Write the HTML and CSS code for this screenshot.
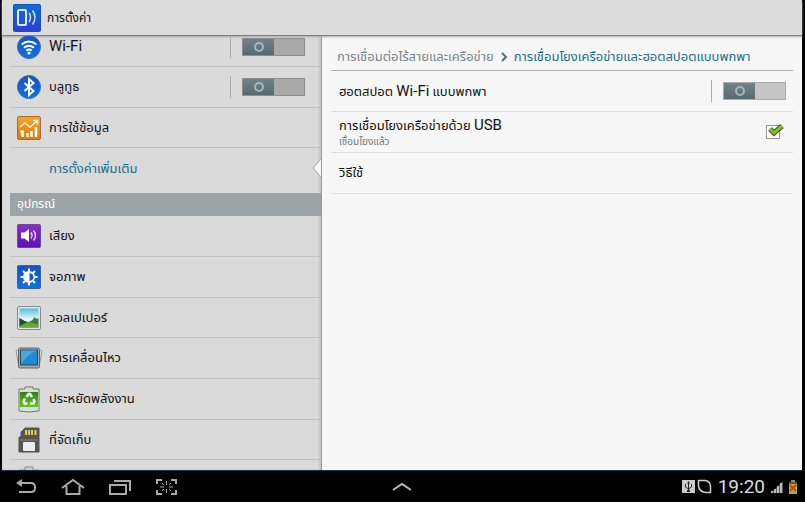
FILE: index.html
```html
<!DOCTYPE html>
<html lang="th">
<head>
<meta charset="utf-8">
<title>การตั้งค่า</title>
<link rel="stylesheet" href="styles.css">
</head>
<body>
<div class="device">
  <header class="topbar">
    <svg class="app-icon" viewBox="0 0 28 28" aria-hidden="true">
      <defs>
        <linearGradient id="blue" x1="0" y1="0" x2="0" y2="1"><stop offset="0" stop-color="#0d6fd8"/><stop offset="1" stop-color="#2a3fd4"/></linearGradient>
        <linearGradient id="display-blue" x1="0" y1="0" x2="0" y2="1"><stop offset="0" stop-color="#1450c0"/><stop offset="1" stop-color="#0e74e2"/></linearGradient>
        <linearGradient id="round" x1="0" y1="0" x2="0" y2="1"><stop offset="0" stop-color="#1a50c0"/><stop offset="1" stop-color="#0c74e6"/></linearGradient>
        <linearGradient id="orange" x1="0" y1="0" x2="0" y2="1"><stop offset="0" stop-color="#f6a52a"/><stop offset="1" stop-color="#e57a08"/></linearGradient>
        <linearGradient id="purple" x1="0" y1="0" x2="0" y2="1"><stop offset="0" stop-color="#8a2fd0"/><stop offset="1" stop-color="#5a12b4"/></linearGradient>
        <linearGradient id="sky" x1="0" y1="0" x2="0" y2="1"><stop offset="0" stop-color="#4fc0d8"/><stop offset="0.6" stop-color="#f2fafa"/></linearGradient>
        <linearGradient id="green" x1="0" y1="0" x2="0" y2="1"><stop offset="0" stop-color="#2b8412"/><stop offset="1" stop-color="#63c61c"/></linearGradient>
      </defs>
      <rect x="0.5" y="0.5" width="27" height="27" rx="1" fill="url(#blue)" stroke="#1d4fb0"/>
      <rect x="5" y="6" width="8" height="15" rx="1" fill="none" stroke="#dcebff" stroke-width="2"/>
      <path d="M16 9q3 4 0 9M19.500 6.500q5 7 0 14" fill="none" stroke="#cfe2ff" stroke-width="1.500"/>
    </svg>
    <h1 class="title">การตั้งค่า</h1>
  </header>

  <main class="panes">
    <nav class="sidebar">
      <ul class="list list-network">
        <li class="row">
          <svg class="icon" viewBox="0 0 24 24" aria-hidden="true"><circle cx="12" cy="12" r="11.500" fill="url(#round)" stroke="#4a6f9c"/><path d="M4.500 9.500q7.500-6 15 0M7 12.700q5-4 10 0M9.300 15.500q2.700-2 5.400 0" fill="none" stroke="#fff" stroke-width="2"/><circle cx="12" cy="18" r="1.600" fill="#fff"/></svg>
          <span class="label" id="wifi"><span class="latin">Wi-Fi</span></span>
          <span class="divider"></span>
          <button class="switch" type="button" role="switch" aria-checked="false" aria-labelledby="wifi"><span class="knob"></span></button>
        </li>
        <li class="row">
          <svg class="icon" viewBox="0 0 24 24" aria-hidden="true"><circle cx="12" cy="12" r="11.500" fill="url(#round)" stroke="#4a6f9c"/><path d="M7.500 8l9 8-4.500 4V4l4.500 4-9 8" fill="none" stroke="#fff" stroke-width="2"/></svg>
          <span class="label" id="bt">บลูทูธ</span>
          <span class="divider"></span>
          <button class="switch" type="button" role="switch" aria-checked="false" aria-labelledby="bt"><span class="knob"></span></button>
        </li>
        <li class="row">
          <svg class="icon" viewBox="0 0 24 24" aria-hidden="true"><rect x="0.500" y="0.500" width="23" height="23" rx="1.500" fill="url(#orange)" stroke="#a5693a"/><path d="M3.500 15.500h2V21M10.500 21v-4M14.500 21v-6M19 21V11" fill="none" stroke="#fff" stroke-width="2.500"/><path d="M3 11l5-4 5 4 7-6M16 4.500h4.500v4" fill="none" stroke="#fff3dd" stroke-width="1.500"/></svg>
          <a class="label" href="#data">การใช้ข้อมูล</a>
        </li>
        <li class="row selected">
          <a class="label" href="#more" aria-current="page">การตั้งค่าเพิ่มเติม</a>
          <svg class="pointer" viewBox="0 0 10 20" aria-hidden="true"><path d="M10 0L1 10l9 10z" fill="#f7f7f7"/><path d="M10 0L1 10l9 10" fill="none" stroke="#999"/></svg>
        </li>
      </ul>
      <h2 class="section">อุปกรณ์</h2>
      <ul class="list list-device">
        <li class="row">
          <svg class="icon" viewBox="0 0 24 24" aria-hidden="true"><rect x="0.500" y="0.500" width="23" height="23" rx="1" fill="url(#purple)" stroke="#6b4a90"/><path d="M4 8.500h3.500L12 5v13l-4.500-3.500H4z" fill="#fff"/><path d="M14 8.500q2 3 0 6M16.500 6.500q4 5 0 10" fill="none" stroke="#e6d4ff" stroke-width="1.500"/></svg>
          <a class="label" href="#sound">เสียง</a>
        </li>
        <li class="row">
          <svg class="icon" viewBox="0 0 24 24" aria-hidden="true"><rect x="0.500" y="0.500" width="23" height="23" rx="1" fill="url(#display-blue)" stroke="#3b639c"/><path d="M12 3.500v17M3.500 12h17M6 6l12 12M18 6L6 18" stroke="#fff" stroke-width="2"/><circle cx="12" cy="12" r="6" fill="#fff"/><path d="M12.500 8q4 .5 4 4t-4 4z" fill="#155bd6"/></svg>
          <a class="label" href="#display">จอภาพ</a>
        </li>
        <li class="row">
          <svg class="icon" viewBox="0 0 24 24" aria-hidden="true"><rect x="0.500" y="0.500" width="23" height="23" rx="1.500" fill="#e5e5e5" stroke="#888"/><rect x="2.500" y="2.500" width="19" height="19" fill="url(#sky)"/><path d="M2.500 13l5 2 4 1 4-2 2-3 2 2 2-1v9.500h-19z" fill="#3d7a34"/><path d="M2.500 20l10-4 9 3v2.500h-19z" fill="#65a83a"/><path d="M2.500 12l7 4-7 4z" fill="#1f4d31"/></svg>
          <a class="label" href="#wallpaper">วอลเปเปอร์</a>
        </li>
        <li class="row">
          <svg class="icon icon-wide" viewBox="0 0 28 24" aria-hidden="true"><path d="M3 4L1 5l3 16 3 1M25 4l2 1-3 16-3 1" fill="#e0e4e6" stroke="#8c9499"/><rect x="3.500" y="2" width="21" height="20" rx="1.500" fill="#aaa" stroke="#5f666a"/><rect x="5.500" y="4" width="17" height="15" fill="#1f8ad2" stroke="#345"/><path d="M6 4.500h16Q13 8 6 18z" fill="#49a9df"/></svg>
          <a class="label" href="#motion">การเคลื่อนไหว</a>
        </li>
        <li class="row">
          <svg class="icon icon-tall" viewBox="0 0 24 28" aria-hidden="true"><path d="M2 4h6V2h8v2h6v22q-10 2-20 0z" fill="#d9dddb" stroke="#70766f"/><rect x="3" y="7" width="18" height="15" fill="url(#green)"/><path d="M9.500 12l2-3h1.500l2 3M16.500 14l1 2.500-1 2H13M10.500 18.500H7.500l-1-2 1.500-3" fill="none" stroke="#fff" stroke-width="2.500"/></svg>
          <a class="label" href="#power">ประหยัดพลังงาน</a>
        </li>
        <li class="row">
          <svg class="icon icon-tall" viewBox="0 0 24 28" aria-hidden="true"><path d="M8 2h14v24H2V11h2V6z" fill="#555" stroke="#555"/><path d="M9 4v5M12 4v5M15 4v5M18.500 4v5" stroke="#e5cf55" stroke-width="2"/><rect x="6" y="16" width="12" height="9" rx="1" fill="#eee"/><path d="M3 14h18" stroke="#888"/></svg>
          <a class="label" href="#storage">ที่จัดเก็บ</a>
        </li>
        <li class="row row-next">
          <svg class="icon icon-tall" viewBox="0 0 24 28" aria-hidden="true"><path d="M2 26V6h6V3h8v3h6v20z" fill="#c9cbc9" stroke="#8d908d"/></svg>
        </li>
      </ul>
    </nav>

    <section class="detail">
      <div class="crumbs">
        <a class="crumb" href="#wireless">การเชื่อมต่อไร้สายและเครือข่าย</a>
        <svg class="chevron" viewBox="0 0 8 10" aria-hidden="true"><path d="M2 1l4 4-4 4" fill="none" stroke="#526c78" stroke-width="2"/></svg>
        <span class="crumb current">การเชื่อมโยงเครือข่ายและฮอตสปอตแบบพกพา</span>
      </div>
      <div class="option">
        <span class="label" id="hotspot">ฮอตสปอต <span class="latin">Wi-Fi</span> แบบพกพา</span>
        <span class="divider"></span>
        <button class="switch" type="button" role="switch" aria-checked="false" aria-labelledby="hotspot"><span class="knob"></span></button>
      </div>
      <label class="option" for="usb">
        <span class="stack">
          <span class="label">การเชื่อมโยงเครือข่ายด้วย <span class="latin">USB</span></span>
          <span class="note">เชื่อมโยงแล้ว</span>
        </span>
        <span class="tick">
          <input class="box" type="checkbox" id="usb" checked>
          <svg class="mark" viewBox="0 0 18 14" aria-hidden="true"><path d="M3 5l4 4 8-7" fill="none" stroke="#33521a" stroke-width="5"/><path d="M3 5l4 4 8-7" fill="none" stroke="#86c422" stroke-width="3"/></svg>
        </span>
      </label>
      <div class="option">
        <a class="label" href="#help">วิธีใช้</a>
      </div>
    </section>
  </main>

  <footer class="navbar">
    <div class="keys">
      <button class="key" type="button" aria-label="กลับ"><svg viewBox="0 0 24 20"><path d="M5 6h12q4 0 4 4.500T17 15H5" fill="none" stroke="#aaa" stroke-width="2"/><path d="M2 6l6-4v8z" fill="#aaa"/></svg></button>
      <button class="key" type="button" aria-label="หน้าหลัก"><svg viewBox="0 0 24 20"><path d="M1 11L12 3l11 8M5.500 9v8h13V9" fill="none" stroke="#aaa" stroke-width="2"/></svg></button>
      <button class="key" type="button" aria-label="แอพล่าสุด"><svg viewBox="0 0 24 20"><path d="M2 8h16v9H2zM6 4h16v10" fill="none" stroke="#aaa" stroke-width="2"/></svg></button>
      <button class="key" type="button" aria-label="จับภาพหน้าจอ"><svg viewBox="0 0 24 20"><path d="M7 3H2v4M16 3h5v4M7 17H2v-4M16 17h5v-4" fill="none" stroke="#aaa" stroke-width="2"/><path d="M11.500 4v4M11.500 12v4M5 10h4M14 10h4M7 6l2 2M16 6l-2 2M7 14l2-2M16 14l-2-2" stroke="#aaa"/></svg></button>
    </div>
    <button class="key" type="button" aria-label="เปิดถาด"><svg viewBox="0 0 24 20"><path d="M3 13l9-6 9 6" fill="none" stroke="#bbb" stroke-width="2"/></svg></button>
    <div class="status">
      <svg class="usb" viewBox="0 0 13 13" aria-hidden="true"><rect width="13" height="13" fill="#ccc"/><path d="M6.500 2v9M3.500 4v3l3 2 3-2V4" fill="none" stroke="#222"/><path d="M6.500 1L8 3.500H5zM5 10h3v2H5z" fill="#222"/></svg>
      <svg class="leaf" viewBox="0 0 15 15" aria-hidden="true"><path d="M1.500 1.500h7q5 1 5 6v6h-5q-6-1-7-6z" fill="none" stroke="#ccc" stroke-width="1.500"/></svg>
      <time class="clock">19:20</time>
      <svg class="signal" viewBox="0 0 12 12" aria-hidden="true"><path d="M0 12L12 0v12z" fill="#555"/><path d="M0 10h2v2H0zM3 8h2v4H3zM6 5h2v7H6zM9 2h2v10H9z" fill="#bbb"/></svg>
      <svg class="battery" viewBox="0 0 10 14" aria-hidden="true"><rect x="3" width="4" height="2" fill="#888"/><rect x="1" y="2" width="8" height="12" fill="#9dbb26"/><rect x="1" y="2" width="8" height="2" fill="#556"/><path d="M2 5l6 6M8 5l-6 6" stroke="#e03a12" stroke-width="2"/></svg>
    </div>
  </footer>
</div>
</body>
</html>
```
FILE: styles.css
```css
*, *::before { box-sizing: border-box; }

body {
  margin: 0;
  background: #fff;
  color: #111;
  font: 12px/16px Roboto, "Noto Sans Thai", "Droid Sans Thai", "Noto Sans", sans-serif;
}

a { color: inherit; text-decoration: none; }
ul { list-style: none; margin: 0; padding: 0; }
button { padding: 0; border: 0; background: none; font: inherit; }
svg { display: block; }

.device {
  display: flex;
  flex-direction: column;
  height: calc(100vh - 5px);
  border: solid #000;
  border-width: 0 3px 0 2px;
}

.topbar {
  position: relative;
  display: flex;
  align-items: center;
  gap: 6px;
  flex: 0 0 36px;
  padding: 0 11px;
  background: #dcdcdc;
  border-bottom: 1px solid #808080;
  box-shadow: 0 1px 2px #aaa;
}

.app-icon { width: 28px; height: 28px; }
.title { margin: 0; font-size: 12px; font-weight: 400; }

.panes {
  display: grid;
  grid-template-columns: minmax(0, 2fr) minmax(0, 3fr);
  flex: 1;
  min-height: 0;
}

.sidebar {
  display: flex;
  flex-direction: column;
  min-height: 0;
  padding-left: 8px;
  overflow: hidden;
  background: #dadada;
  border-right: 1px solid #999;
  box-shadow: inset -2px 0 2px #c4c4c4;
}

.row {
  position: relative;
  display: flex;
  align-items: center;
  flex: 0 0 auto;
  gap: 8px;
  height: 41px;
  padding: 0 16px 0 7px;
  border-bottom: 1px solid #c2c2c2;
}

.list-network .row:first-child { height: 31px; padding-bottom: 9px; }
.list-network .row:nth-child(3) { height: 40px; }
.list-network .selected { height: 45px; padding-left: 39px; padding-bottom: 3px; border-bottom: 0; }
.list-device { flex: 1; min-height: 0; overflow: hidden; }
.list-device .row:nth-child(3n) { height: 40px; }
.row-next { align-items: flex-start; padding-top: 4px; }

.icon { width: 24px; height: 24px; flex: none; }
.icon-wide { width: 28px; margin: 0 -2px; }
.icon-tall { height: 28px; }
.label { font-size: 13px; line-height: 18px; }
.latin { font-size: 15px; }
.selected .label, .crumb.current { color: #17708f; }

.pointer { position: absolute; top: 10px; right: -1px; width: 10px; height: 20px; }

.divider { width: 1px; height: 22px; margin: 0 3px 0 auto; background: #aaa; }

.switch {
  width: 63px;
  height: 18px;
  background: #a9a9a9;
  border: 1px solid #8d8d8d;
}

.detail .switch { background: #c5c5c5; border-color: #aaa; }

.knob {
  display: grid;
  place-items: center;
  width: 31px;
  height: 16px;
  background: linear-gradient(#718289, #566a72);
}

.knob::before {
  content: "";
  width: 10px;
  height: 10px;
  border: 2px solid #a9b6bb;
  border-radius: 50%;
}

.section {
  flex: none;
  margin: 0;
  padding: 3px 7px 4px;
  background: #9aa3a8;
  color: #fff;
  font-size: 12px;
  font-weight: 400;
}

.detail { padding: 0 9px; background: #f7f7f7; }

.crumbs {
  display: flex;
  align-items: center;
  gap: 6px;
  height: 35px;
  padding: 8px 6px 0;
  border-bottom: 1px solid #b0b0b0;
  white-space: nowrap;
}

.crumb { color: #78858c; font-size: 13px; }
.chevron { width: 8px; height: 10px; flex: none; }

.option {
  display: flex;
  align-items: center;
  gap: 8px;
  height: 41px;
  padding: 0 7px 0 8px;
  border-bottom: 1px solid #dedede;
}

.stack { display: grid; }
.note { color: #777; font-size: 10px; line-height: 14px; }

.tick { position: relative; margin: 0 6px 0 auto; }

.box {
  display: block;
  appearance: none;
  width: 14px;
  height: 14px;
  margin: 0;
  background: #fff;
  border: 1px solid #999;
}

.mark { position: absolute; top: -1px; left: 1px; width: 18px; height: 14px; }

.navbar {
  display: grid;
  grid-template-columns: 1fr auto 1fr;
  align-items: center;
  flex: 0 0 32px;
  padding: 0 4px;
  background: #000;
  border-top: 1px solid #123442;
}

.keys { display: flex; gap: 23px; padding-left: 8px; }
.key, .key svg { width: 24px; height: 20px; }
.status { display: flex; align-items: center; justify-content: flex-end; gap: 2px; }
.usb { width: 13px; height: 13px; }
.leaf { width: 15px; height: 15px; }
.clock { margin: 0 4px; color: #ddd; font-size: 19px; line-height: 24px; }
.signal { width: 12px; height: 12px; }
.battery { width: 10px; height: 14px; margin-left: 3px; }
```
